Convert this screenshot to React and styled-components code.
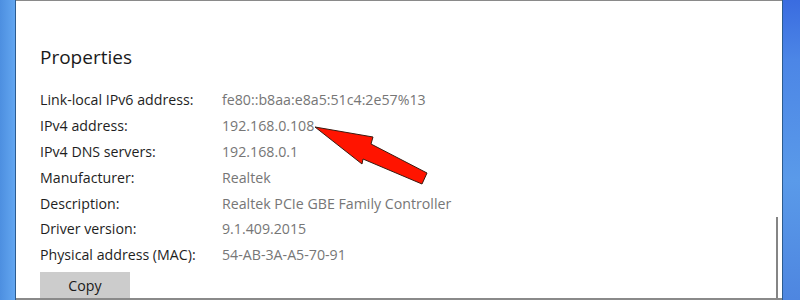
import React from 'react';
import styled, { createGlobalStyle } from 'styled-components';

const GlobalStyle = createGlobalStyle`
  html, body, #root {
    margin: 0;
    padding: 0;
    width: 800px;
    height: 300px;
    overflow: hidden;
  }
  body {
    font-family: "Open Sans", "Noto Sans", sans-serif;
    background: #fff;
  }
`;

const properties = [
  ['Link-local IPv6 address:', 'fe80::b8aa:e8a5:51c4:2e57%13'],
  ['IPv4 address:', '192.168.0.108'],
  ['IPv4 DNS servers:', '192.168.0.1'],
  ['Manufacturer:', 'Realtek'],
  ['Description:', 'Realtek PCIe GBE Family Controller'],
  ['Driver version:', '9.1.409.2015'],
  ['Physical address (MAC):', '54-AB-3A-A5-70-91'],
];

function App() {
  return (
    <>
      <GlobalStyle />
      <Screen>
        <Desktop side="left" />
        <Window>
          <Content>
            <Title>Properties</Title>
            <PropList>
              {properties.map(([label, value]) => (
                <Row key={label}>
                  <Label>{label}</Label>
                  <Value>{value}</Value>
                </Row>
              ))}
            </PropList>
            <CopyButton>Copy</CopyButton>
          </Content>
          <ScrollThumb />
          <Arrow viewBox="0 0 800 300" width="800" height="300">
            <polygon
              points="315,127 373,137 371,144 427,173 422,184 363,159 362,164"
              fill="#ff1400"
              stroke="#3a1a10"
              strokeWidth="1"
              strokeLinejoin="miter"
            />
          </Arrow>
        </Window>
        <Desktop side="right" />
      </Screen>
    </>
  );
}

const Screen = styled.div`
  display: flex;
  width: 800px;
  height: 300px;
`;

const Desktop = styled.div`
  flex: none;
  width: ${(p) => (p.side === 'left' ? '15px' : '17px')};
  background: ${(p) =>
    p.side === 'left'
      ? 'linear-gradient(90deg, #4d8fe0 0%, #63a6f0 100%)'
      : 'linear-gradient(180deg, #3a6ce0 0%, #4c86e6 20%, #5a9ae9 60%, #4e86e0 100%)'};
  border-${(p) => (p.side === 'left' ? 'right' : 'left')}: 1px solid #2c5c90;
`;

const Window = styled.div`
  position: relative;
  flex: 1;
  background: #fff;
  border-top: 1px solid #8a8a8a;
  border-bottom: 2px solid #8a8a8a;
  overflow: hidden;
`;

const Content = styled.div`
  padding: 43px 0 0 24px;
  display: flex;
  flex-direction: column;
`;

const Title = styled.h2`
  margin: 0;
  font-size: 19px;
  font-weight: 400;
  color: #1a1a1a;
  line-height: 26px;
`;

const PropList = styled.div`
  margin-top: 17px;
  display: flex;
  flex-direction: column;
`;

const Row = styled.div`
  display: grid;
  grid-template-columns: 182px 1fr;
  height: 25.8px;
  align-items: center;
  font-size: 14.2px;
`;

const Label = styled.span`
  color: #1e1e1e;
`;

const Value = styled.span`
  color: #767676;
`;

const CopyButton = styled.button`
  margin-top: 4px;
  width: 90px;
  height: 34px;
  padding: 0 0 6px;
  border: none;
  background: #cccccc;
  color: #1a1a1a;
  font-family: inherit;
  font-size: 14.2px;
  text-align: center;
`;

const ScrollThumb = styled.div`
  position: absolute;
  right: 4px;
  top: 216px;
  bottom: 0;
  width: 2px;
  background: #858585;
`;

const Arrow = styled.svg`
  position: absolute;
  left: -16px;
  top: -1px;
  pointer-events: none;
`;

export default App;
